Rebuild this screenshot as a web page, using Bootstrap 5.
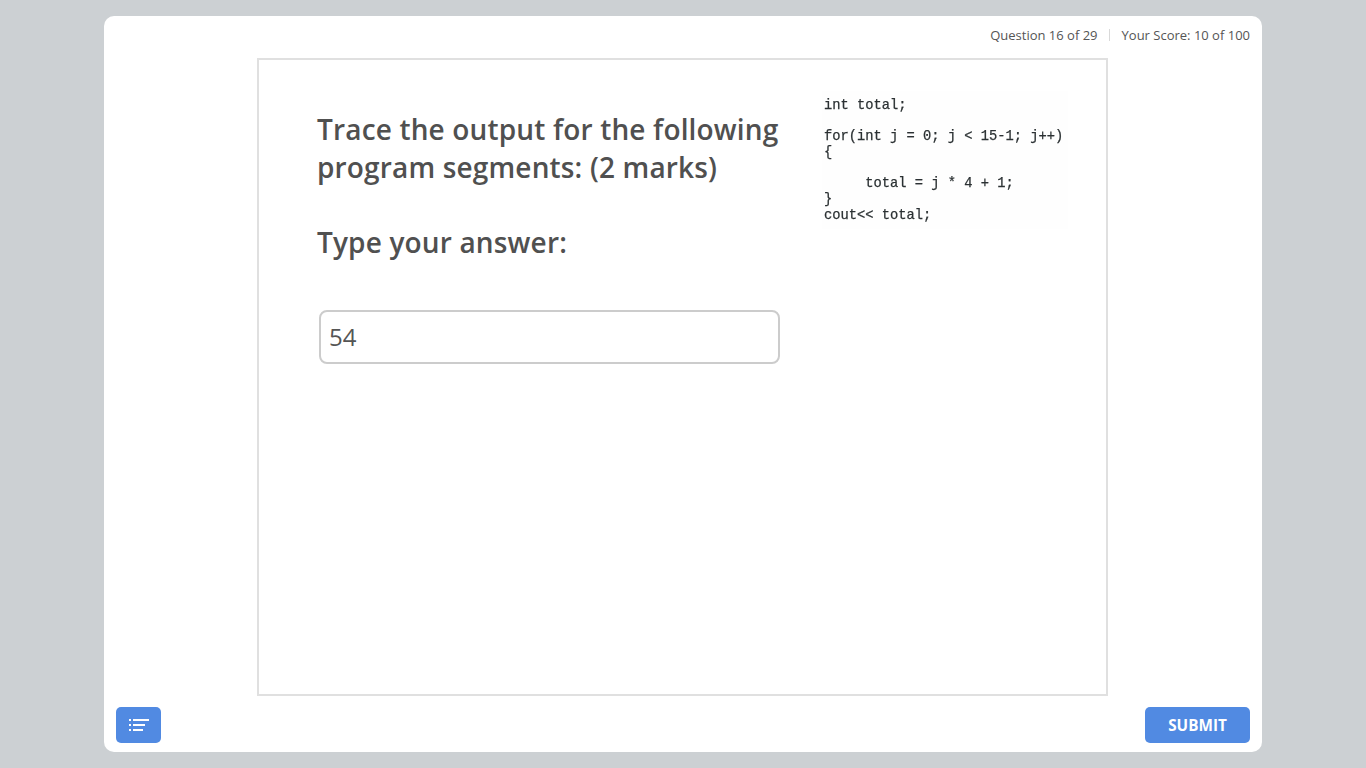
<!DOCTYPE html>
<html lang="en">
<head>
  <meta charset="UTF-8" />
  <meta name="viewport" content="width=device-width, initial-scale=1.0"/>
  <title>Quiz</title>
  <link href="https://cdn.jsdelivr.net/npm/bootstrap@5.3.3/dist/css/bootstrap.min.css" rel="stylesheet" />
  <style>
    body {
      background: #ccd0d3;
      font-family: "Open Sans", sans-serif;
      color: #4a4a4a;
      height: 100vh;
      padding: 16px 0;
      overflow: hidden;
    }
    .quiz-shell {
      width: 1158px;
      height: 736px;
      border-radius: 10px;
    }
    .quiz-top {
      height: 42px;
      padding: 0 12px 4px 0;
      font-size: 13px;
      line-height: 18px;
      color: #555;
    }
    .quiz-sep {
      width: 1px;
      height: 12px;
      background: #d9d9d9;
      margin: 0 12px 0 11px;
    }
    .quiz-box {
      width: 851px;
      height: 638px;
      margin-left: 153px;
      border: 2px solid #e0e0e0;
      padding: 31px 38px 0 58px;
    }
    .quiz-left {
      width: 465px;
      padding-top: 19px;
    }
    .quiz-title {
      font-size: 28px;
      line-height: 38px;
      font-weight: 600;
      letter-spacing: 0.16px;
      color: #505050;
      margin-bottom: 37px;
    }
    .quiz-input.form-control {
      width: 461px;
      height: 54px;
      margin-top: 49px;
      margin-left: 2px;
      border: 2px solid #ccc;
      border-radius: 8px;
      font-size: 24px;
      font-weight: 400;
      color: #555;
      padding: 0 8px 2px;
    }
    .code-shot {
      width: 246px;
      margin: 0 0 0 40px;
      padding: 7px 0 6px 2px;
      background: #fefefe;
      font-family: "Liberation Mono", monospace;
      font-size: 13.75px;
      line-height: 15.65px;
      color: #2b3133;
      -webkit-text-stroke: 0.25px #2b3133;
      filter: blur(0.35px);
      overflow: hidden;
    }
    .quiz-bottom {
      padding: 11px 12px 0;
    }
    .quiz-btn {
      height: 36px;
      background: #518ae2;
      border: 0;
      border-radius: 5px;
      color: #fff;
      font-size: 15.3px;
      font-weight: 700;
      padding: 0;
    }
    .quiz-btn:hover { background: #518ae2; color: #fff; }
    .btn-list { width: 45px; }
    .btn-submit { width: 105px; }
  </style>
</head>
<body>
  <div class="quiz-shell bg-white mx-auto">
    <div class="quiz-top d-flex justify-content-end align-items-center">
      <span>Question 16 of 29</span>
      <span class="quiz-sep"></span>
      <span>Your Score: 10 of 100</span>
    </div>
    <div class="quiz-box d-flex align-items-start">
      <div class="quiz-left">
        <h1 class="quiz-title">Trace the output for the following program segments: (2 marks)</h1>
        <h1 class="quiz-title mb-0">Type your answer:</h1>
        <input type="text" class="form-control quiz-input" value="54" />
      </div>
      <pre class="code-shot">int total;

for(int j = 0; j &lt; 15-1; j++)
{

     total = j * 4 + 1;
}
cout&lt;&lt; total;</pre>
    </div>
    <div class="quiz-bottom d-flex justify-content-between">
      <button class="btn quiz-btn btn-list d-flex align-items-center justify-content-center" aria-label="Question list">
        <svg width="21" height="14" viewBox="0 0 21 14" fill="#fff" shape-rendering="crispEdges">
          <rect x="1" y="1" width="2" height="2"/>
          <rect x="5" y="1" width="16" height="2"/>
          <rect x="1" y="6" width="2" height="2"/>
          <rect x="5" y="6" width="12" height="2"/>
          <rect x="1" y="11" width="2" height="2"/>
          <rect x="5" y="11" width="10" height="2"/>
        </svg>
      </button>
      <button class="btn quiz-btn btn-submit">SUBMIT</button>
    </div>
  </div>
  <script src="https://cdn.jsdelivr.net/npm/bootstrap@5.3.3/dist/js/bootstrap.bundle.min.js"></script>
</body>
</html>
